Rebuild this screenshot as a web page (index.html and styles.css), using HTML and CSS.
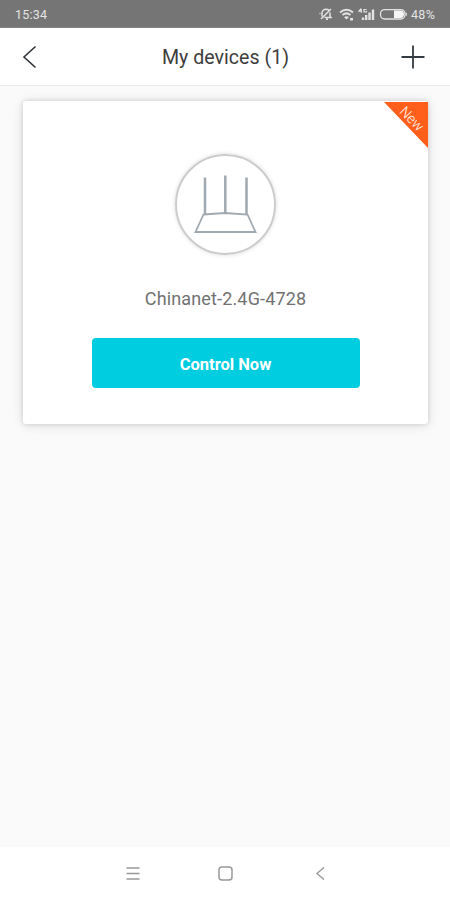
FILE: index.html
```html
<!DOCTYPE html>
<html lang="en">
<head>
<meta charset="utf-8">
<title>My devices</title>
<link rel="stylesheet" href="styles.css">
</head>
<body>
<div class="screen">
  <div class="status">
    <span class="time">15:34</span>
    <svg class="status-icons" width="91" height="18" viewBox="0 0 91 18" fill="none" stroke="#e2e2e2">
      <path d="M4 11.500V8q.5-3.500 4-3.700 2 0 3.200 1.200M12 7.500V11l1 1.500H6.500M8 14.200h2M13 4L3 14M2.500 8.500H1.500" stroke-width="1.500"/>
      <path d="M22 7.500q6.500-5.500 13 0M24.500 10q4-3.200 8 0" stroke-width="2"/>
      <path d="M26 12q2.500-1.500 5 0l-2.500 2.500zM32 13h3v2.500h-3z" fill="#e2e2e2" stroke="none"/>
      <path d="M43 3.700l-2 2.500h3M43.300 3.700v4M48.500 4.500H46V7h2.500V5.800" stroke-width="1.200"/>
      <path d="M45 12.500V15M48.200 10V15M51.500 7.500V15M55 4.500V15" stroke-width="2.400"/>
      <rect x="62.500" y="4.600" width="24.500" height="9.400" rx="4.200" stroke-width="1.300"/>
      <path d="M76 5.600h6.500q3.500 0 3.500 3.700t-3.500 3.700h-6.500z" fill="#f5f5f5" stroke="none"/>
      <path d="M88.200 7.800v3" stroke-width="1.300"/>
    </svg>
    <span class="percent">48%</span>
  </div>
  <header class="header">
    <svg class="head-icon" width="30" height="30" viewBox="0 0 30 30" fill="none" stroke="#303438" stroke-width="1.600"><path d="M20.500 4.500L9 15l11.500 10.500"/></svg>
    <h1 class="title">My devices (1)</h1>
    <svg class="head-icon" width="30" height="30" viewBox="0 0 30 30" fill="none" stroke="#343c42" stroke-width="1.800"><path d="M15 3.500v23M3.500 15h23"/></svg>
  </header>
  <main class="content">
    <section class="card">
      <svg class="ribbon" width="44" height="46" viewBox="0 0 44 46">
        <path d="M0 0h44v46z" fill="#ff5f1b"/>
        <text x="27.500" y="21" text-anchor="middle" transform="rotate(46 27 17)">New</text>
      </svg>
      <div class="device">
        <svg width="98" height="98" viewBox="0 0 98 98" fill="none" stroke="#a0a9b0" stroke-width="2">
          <path d="M28 21.500V58M48.300 19.500V57M69.500 21.500V58" stroke-width="2.500"/>
          <path d="M26.500 58.500L48 57l22.500 1.500 8 17.500H18.500z" stroke-width="1.800"/>
        </svg>
      </div>
      <p class="name">Chinanet-2.4G-4728</p>
      <button class="control">Control Now</button>
    </section>
  </main>
  <nav class="nav">
    <svg width="20" height="20" viewBox="0 0 20 20" fill="none" stroke="#999" stroke-width="1.400"><path d="M3.500 4h13M3.500 9.500h13M3.500 15h13"/></svg>
    <svg width="20" height="20" viewBox="0 0 20 20" fill="none" stroke="#999" stroke-width="1.500"><rect x="2" y="3" width="13" height="13" rx="3"/></svg>
    <svg width="20" height="20" viewBox="0 0 20 20" fill="none" stroke="#999" stroke-width="1.400"><path d="M14 3.500L7 9.500l7 6"/></svg>
  </nav>
</div>
</body>
</html>
```
FILE: styles.css
```css
* { box-sizing: border-box; }
body { margin: 0; font-family: Roboto, sans-serif; }
.screen { width: 450px; height: 900px; display: flex; flex-direction: column; background: #fafafa; }
.status { height: 28px; flex: none; display: flex; align-items: center; padding: 1px 14px 0 15px; background: #757575; border-bottom: 1px solid #858585; color: #e4e4e4; font-size: 12px; }
.time { font-size: 12.5px; flex: 1; letter-spacing: 0.2px; }
.status-icons { margin-right: 2px; flex: none; }
.percent { width: 25px; font-size: 12.5px; letter-spacing: 0.3px; }
.header { height: 58px; flex: none; display: flex; align-items: center; justify-content: space-between; padding: 0 22px 0 15px; background: #fff; border-bottom: 1px solid #ebebeb; }
.title { margin: 0; padding: 2px 0 0 8px; font-size: 19.6px; font-weight: 400; line-height: 30px; color: #3d3d3d; }
.content { flex: 1; padding: 15px 22px 0 23px; }
.card { position: relative; height: 323px; display: flex; flex-direction: column; align-items: center; padding-top: 53px; background: #fff; border-radius: 3px; box-shadow: 0 0 4px rgba(0,0,0,.13), 0 1px 12px rgba(0,0,0,.13); }
.ribbon { position: absolute; top: 1px; right: 0; }
.ribbon text { font: 300 14px Roboto, sans-serif; fill: #fff; }
.device { width: 101px; height: 101px; border: 2px solid #ccc; border-radius: 50%; box-shadow: 0 0 4px rgba(0,0,0,.14); }
.device svg { display: block; }
.name { margin: 32px 0 0; font-size: 18px; line-height: 24px; letter-spacing: 0.15px; color: #727272; }
.control { width: 268px; height: 50px; margin-top: 27px; padding: 2px 0 0; border: 0; border-radius: 4px; background: #00cde0; color: #fff; font: 700 16.5px Roboto, sans-serif; }
.nav { height: 53px; flex: none; display: flex; align-items: center; justify-content: space-between; padding: 0 120px 0 123px; background: #fff; }
```
